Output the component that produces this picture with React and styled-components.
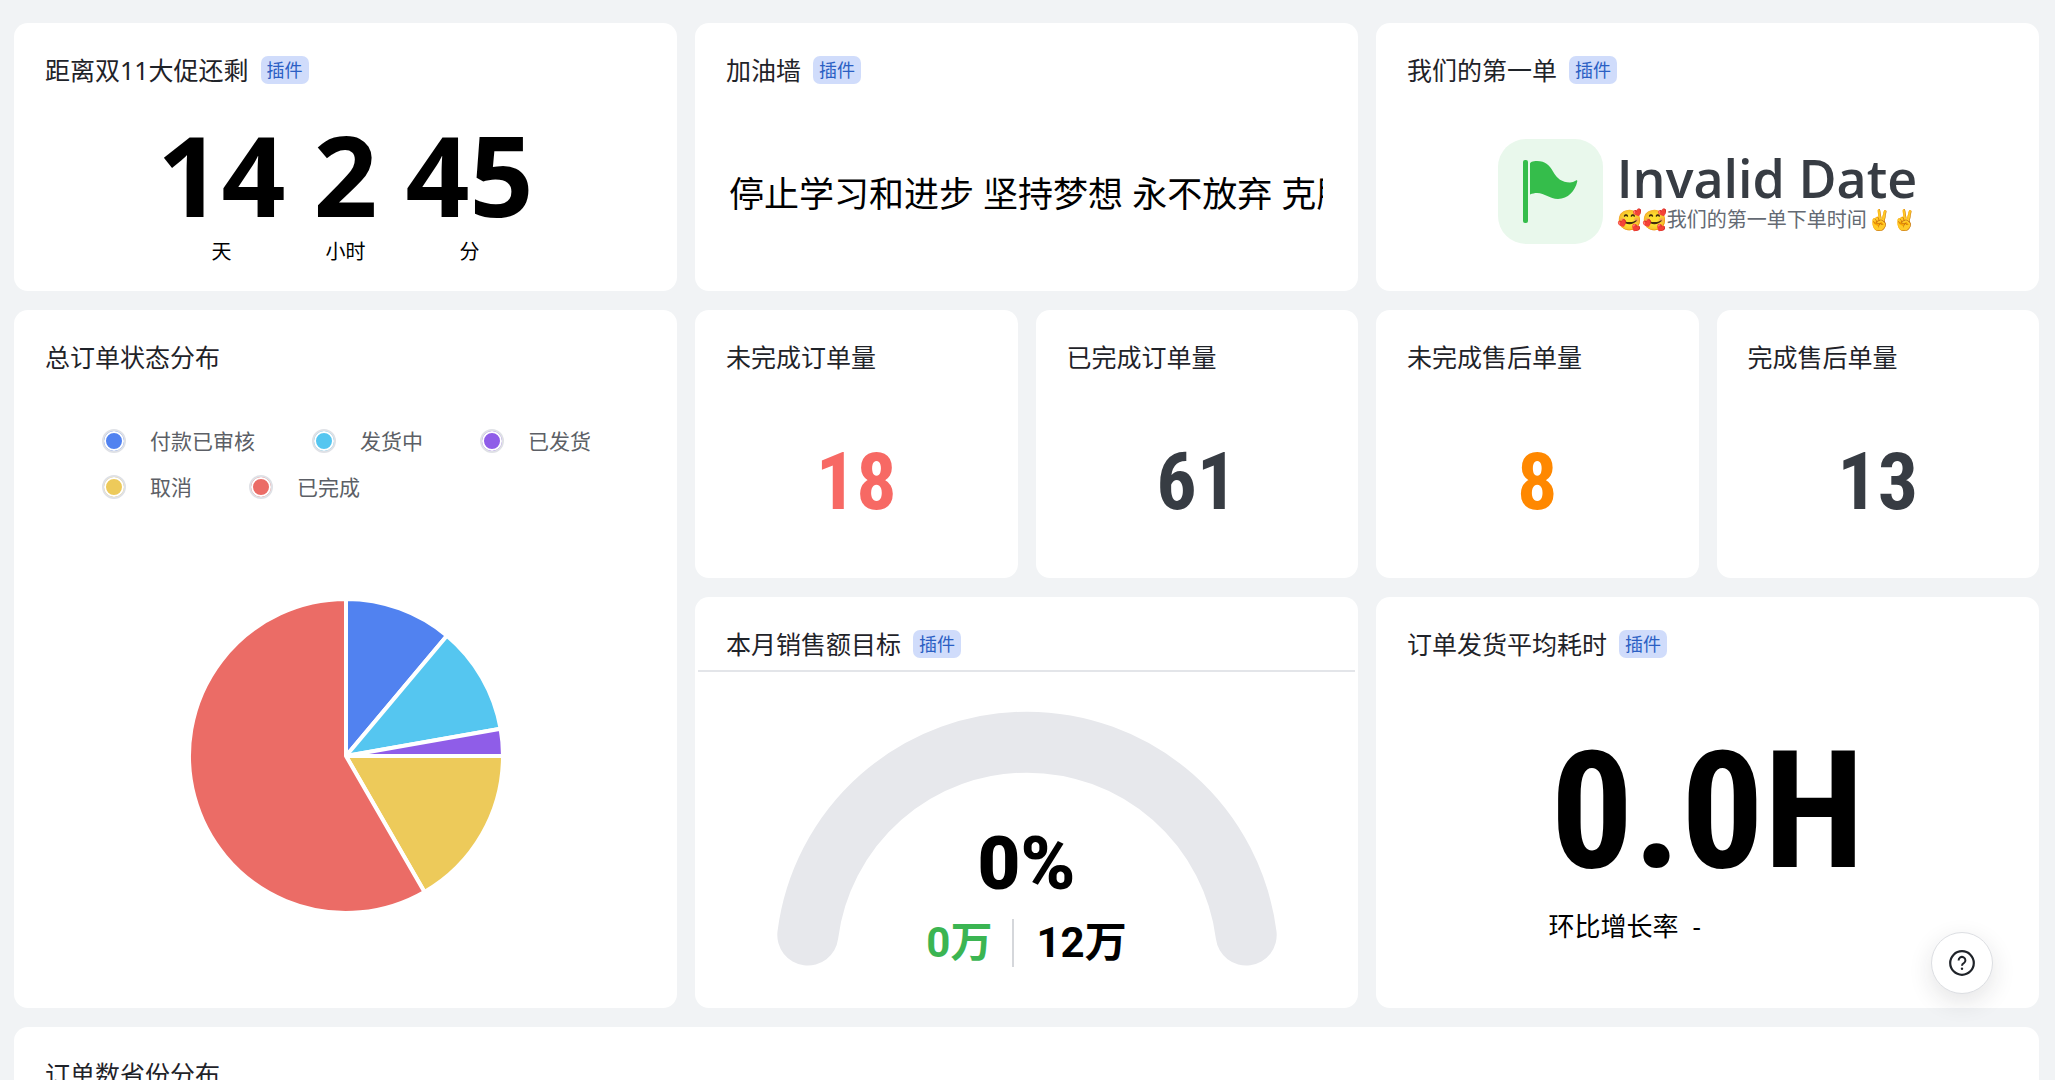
import React from "react";
import styled, { createGlobalStyle } from "styled-components";

const GlobalStyle = createGlobalStyle`
  * {
    box-sizing: border-box;
  }
  body {
    margin: 0;
    background: #f1f3f5;
    color: #000;
    font-family: "Noto Sans", "Noto Sans CJK SC", sans-serif;
  }
`;

const Screen = styled.main`
  height: 100vh;
  overflow-y: auto;
  scrollbar-width: none;
`;

const Board = styled.div`
  display: grid;
  grid-template-columns: repeat(6, 1fr);
  grid-template-rows: 268px 268px 411px auto;
  column-gap: 18px;
  row-gap: 19px;
  padding: 23px 16px 23px 14px;
`;

const Card = styled.section`
  grid-column: span ${(p) => p.$cols || 2};
  grid-row: span ${(p) => p.$rows || 1};
  display: flex;
  flex-direction: column;
  min-width: 0;
  min-height: ${(p) => (p.$tall ? "400px" : "0")};
  border-radius: 14px;
  background: #fff;
`;

const Head = styled.header`
  display: flex;
  align-items: center;
  gap: 12px;
  padding: 33px 31px 0;
  line-height: 28px;
`;

const Title = styled.h2`
  margin: 0;
  color: #1f2329;
  font-size: 25px;
  font-weight: 400;
  white-space: nowrap;
`;

const Tag = styled.span`
  padding: 0 6px;
  border-radius: 7px;
  background: #d0dcfb;
  color: #2b5fc4;
  font-size: 18px;
`;

const Countdown = styled.div`
  display: flex;
  justify-content: center;
  gap: 28px;
  padding-top: 34px;
`;

const Unit = styled.div`
  display: flex;
  flex-direction: column;
  align-items: center;
  gap: 10px;
`;

const UnitValue = styled.strong`
  font-family: "Noto Sans", "Open Sans", sans-serif;
  font-size: 112px;
  font-weight: 700;
  line-height: 112px;
`;

const UnitName = styled.span`
  font-size: 20px;
  line-height: 24px;
`;

const Marquee = styled.p`
  margin: 85px 35px 0 34px;
  overflow: hidden;
  font-size: 35px;
  line-height: 50px;
  white-space: nowrap;
`;

const FirstOrder = styled.div`
  display: flex;
  justify-content: center;
  gap: 14px;
  padding-top: 55px;
`;

const FlagBox = styled.div`
  display: flex;
  width: 105px;
  height: 105px;
  border-radius: 28px;
  background: #e9f8ec;
`;

const FirstOrderText = styled.div`
  display: flex;
  flex-direction: column;
  padding-top: 10px;
`;

const DateValue = styled.strong`
  color: #373c43;
  font-family: "Open Sans", "Noto Sans", sans-serif;
  font-size: 52px;
  font-weight: 600;
  line-height: 58px;
`;

const DateNote = styled.span`
  color: #646a73;
  font-size: 20px;
  line-height: 26px;
`;

const Legend = styled.ul`
  display: flex;
  flex-wrap: wrap;
  gap: 16px 57px;
  margin: 0;
  padding: 55px 64px 0 88px;
  list-style: none;
`;

const LegendItem = styled.li`
  display: flex;
  align-items: center;
  gap: 24px;
  color: #5c5f66;
  font-size: 21px;
  line-height: 30px;
`;

const Dot = styled.i`
  width: 24px;
  height: 24px;
  border: 2px solid #dfe1e6;
  border-radius: 50%;
  background: ${(p) => p.$color};
  box-shadow: inset 0 0 0 2px #fff;
`;

const PieBox = styled.div`
  display: flex;
  justify-content: center;
  padding-top: 94px;
`;

const Stat = styled.div`
  padding-top: 71px;
  color: ${(p) => p.$color};
  font-family: "Roboto Condensed", Roboto, sans-serif;
  font-size: 80px;
  font-weight: 700;
  line-height: 80px;
  text-align: center;
`;

const Rule = styled.hr`
  width: calc(100% - 6px);
  height: 2px;
  margin: 12px auto 0;
  border: 0;
  background: #e3e5e9;
`;

const Gauge = styled.div`
  display: grid;
  justify-items: center;
  padding-top: 39px;
  & > * {
    grid-area: 1 / 1;
  }
`;

const GaugeText = styled.div`
  display: flex;
  flex-direction: column;
  align-items: center;
  align-self: end;
  gap: 18px;
  font-family: Roboto, "Noto Sans CJK SC", sans-serif;
  font-weight: 700;
`;

const Percent = styled.strong`
  font-size: 74px;
  line-height: 74px;
`;

const Amounts = styled.div`
  display: flex;
  font-size: 42px;
  line-height: 48px;
`;

const Done = styled.span`
  padding-right: 20px;
  border-right: 2px solid #d5d7db;
  color: #3bb552;
`;

const Goal = styled.span`
  padding-left: 22px;
`;

const Duration = styled.div`
  display: flex;
  flex-direction: column;
  align-self: center;
  padding-top: 71px;
`;

const DurationValue = styled.strong`
  padding: 0 2px;
  font-family: "Roboto Condensed", Roboto, sans-serif;
  font-size: 164px;
  font-weight: 700;
  line-height: 164px;
`;

const Growth = styled.span`
  display: flex;
  gap: 14px;
  padding-top: 13px;
  font-size: 26px;
  line-height: 40px;
`;

const HelpButton = styled.button`
  position: fixed;
  right: 62px;
  bottom: 86px;
  display: flex;
  align-items: center;
  justify-content: center;
  width: 62px;
  height: 62px;
  padding: 0;
  border: 1px solid #dcdee2;
  border-radius: 50%;
  background: #fff;
  color: #1f2329;
  box-shadow: 0 8px 24px rgba(31, 35, 41, 0.12);
  cursor: pointer;
`;

const orderStatus = [
  { name: "付款已审核", value: 4, color: "#5182f0" },
  { name: "发货中", value: 4, color: "#55c6f0" },
  { name: "已发货", value: 1, color: "#8f5de8" },
  { name: "取消", value: 6, color: "#edca5a" },
  { name: "已完成", value: 21, color: "#eb6c66" },
];

const stats = [
  { title: "未完成订单量", value: 18, color: "#f76964" },
  { title: "已完成订单量", value: 61, color: "#373c43" },
  { title: "未完成售后单量", value: 8, color: "#ff8800" },
  { title: "完成售后单量", value: 13, color: "#373c43" },
];

const countdown = [
  { name: "天", value: 14 },
  { name: "小时", value: 2 },
  { name: "分", value: 45 },
];

const CardHead = ({ title, plugin }) => (
  <Head>
    <Title>{title}</Title>
    {plugin && <Tag>插件</Tag>}
  </Head>
);

const Pie = ({ data }) => {
  const total = data.reduce((sum, d) => sum + d.value, 0);
  const r = 157;
  const point = (v) => {
    const a = (v / total) * Math.PI * 2;
    return `${160 + r * Math.sin(a)} ${160 - r * Math.cos(a)}`;
  };
  let sum = 0;

  return (
    <svg width="320" height="320" viewBox="0 0 320 320" role="img" aria-label="总订单状态分布">
      {data.map((d) => {
        const start = sum;
        sum += d.value;
        const large = d.value / total > 0.5 ? 1 : 0;
        return (
          <path
            key={d.name}
            d={`M160 160L${point(start)}A${r} ${r} 0 ${large} 1 ${point(sum)}Z`}
            fill={d.color}
            stroke="#fff"
            strokeWidth="4"
            strokeLinejoin="round"
          />
        );
      })}
    </svg>
  );
};

const Flag = () => (
  <svg width="105" height="105" viewBox="0 0 105 105" aria-hidden="true">
    <rect x="25" y="21" width="5" height="63" rx="2" fill="#35bd4b" />
    <path
      d="M32 25C32 23 34.5 22 39 22C47.5 22 51.5 26.5 55 32.5C59 39.5 64 43.5 72 43.5C74 43.5 76 42.5 78 41.5C79 41 79.5 41.5 79.2 42.8C77 52 70 60 60 60C51.5 60 47 54 39 54C36.5 54 34.5 54.5 32 55.5Z"
      fill="#35bd4b"
    />
  </svg>
);

const App = () => {
  return (
    <>
      <GlobalStyle />
      <Screen>
        <Board>
          <Card>
            <CardHead title="距离双11大促还剩" plugin />
            <Countdown>
              {countdown.map((c) => (
                <Unit key={c.name}>
                  <UnitValue>{c.value}</UnitValue>
                  <UnitName>{c.name}</UnitName>
                </Unit>
              ))}
            </Countdown>
          </Card>

          <Card>
            <CardHead title="加油墙" plugin />
            <Marquee>停止学习和进步 坚持梦想 永不放弃 克服</Marquee>
          </Card>

          <Card>
            <CardHead title="我们的第一单" plugin />
            <FirstOrder>
              <FlagBox>
                <Flag />
              </FlagBox>
              <FirstOrderText>
                <DateValue>Invalid Date</DateValue>
                <DateNote>🥰🥰我们的第一单下单时间✌️✌️</DateNote>
              </FirstOrderText>
            </FirstOrder>
          </Card>

          <Card $rows={2}>
            <CardHead title="总订单状态分布" />
            <Legend>
              {orderStatus.map((s) => (
                <LegendItem key={s.name}>
                  <Dot $color={s.color} />
                  {s.name}
                </LegendItem>
              ))}
            </Legend>
            <PieBox>
              <Pie data={orderStatus} />
            </PieBox>
          </Card>

          {stats.map((s) => (
            <Card $cols={1} key={s.title}>
              <CardHead title={s.title} />
              <Stat $color={s.color}>{s.value}</Stat>
            </Card>
          ))}

          <Card>
            <CardHead title="本月销售额目标" plugin />
            <Rule />
            <Gauge>
              <svg width="502" height="256" viewBox="0 0 502 256" aria-hidden="true">
                <path
                  d="M31.8 224A221 221 0 0 1 470.2 224"
                  fill="none"
                  stroke="#e7e8ec"
                  strokeWidth="61"
                  strokeLinecap="round"
                />
              </svg>
              <GaugeText>
                <Percent>0%</Percent>
                <Amounts>
                  <Done>0万</Done>
                  <Goal>12万</Goal>
                </Amounts>
              </GaugeText>
            </Gauge>
          </Card>

          <Card>
            <CardHead title="订单发货平均耗时" plugin />
            <Duration>
              <DurationValue>0.0H</DurationValue>
              <Growth>
                环比增长率 <span>-</span>
              </Growth>
            </Duration>
          </Card>

          <Card $cols={6} $tall>
            <CardHead title="订单数省份分布" />
          </Card>
        </Board>
      </Screen>

      <HelpButton type="button" aria-label="帮助">
        <svg width="26" height="26" viewBox="0 0 26 26" fill="none" stroke="currentColor" aria-hidden="true">
          <circle cx="13" cy="13" r="11.8" strokeWidth="2.2" />
          <path d="M9.6 10.4A3.4 3.4 0 1 1 14.8 13.2C13.6 13.9 13 14.5 13 15.8" strokeWidth="2" />
          <circle cx="13" cy="18.8" r="1.2" fill="currentColor" stroke="none" />
        </svg>
      </HelpButton>
    </>
  );
};

export default App;
